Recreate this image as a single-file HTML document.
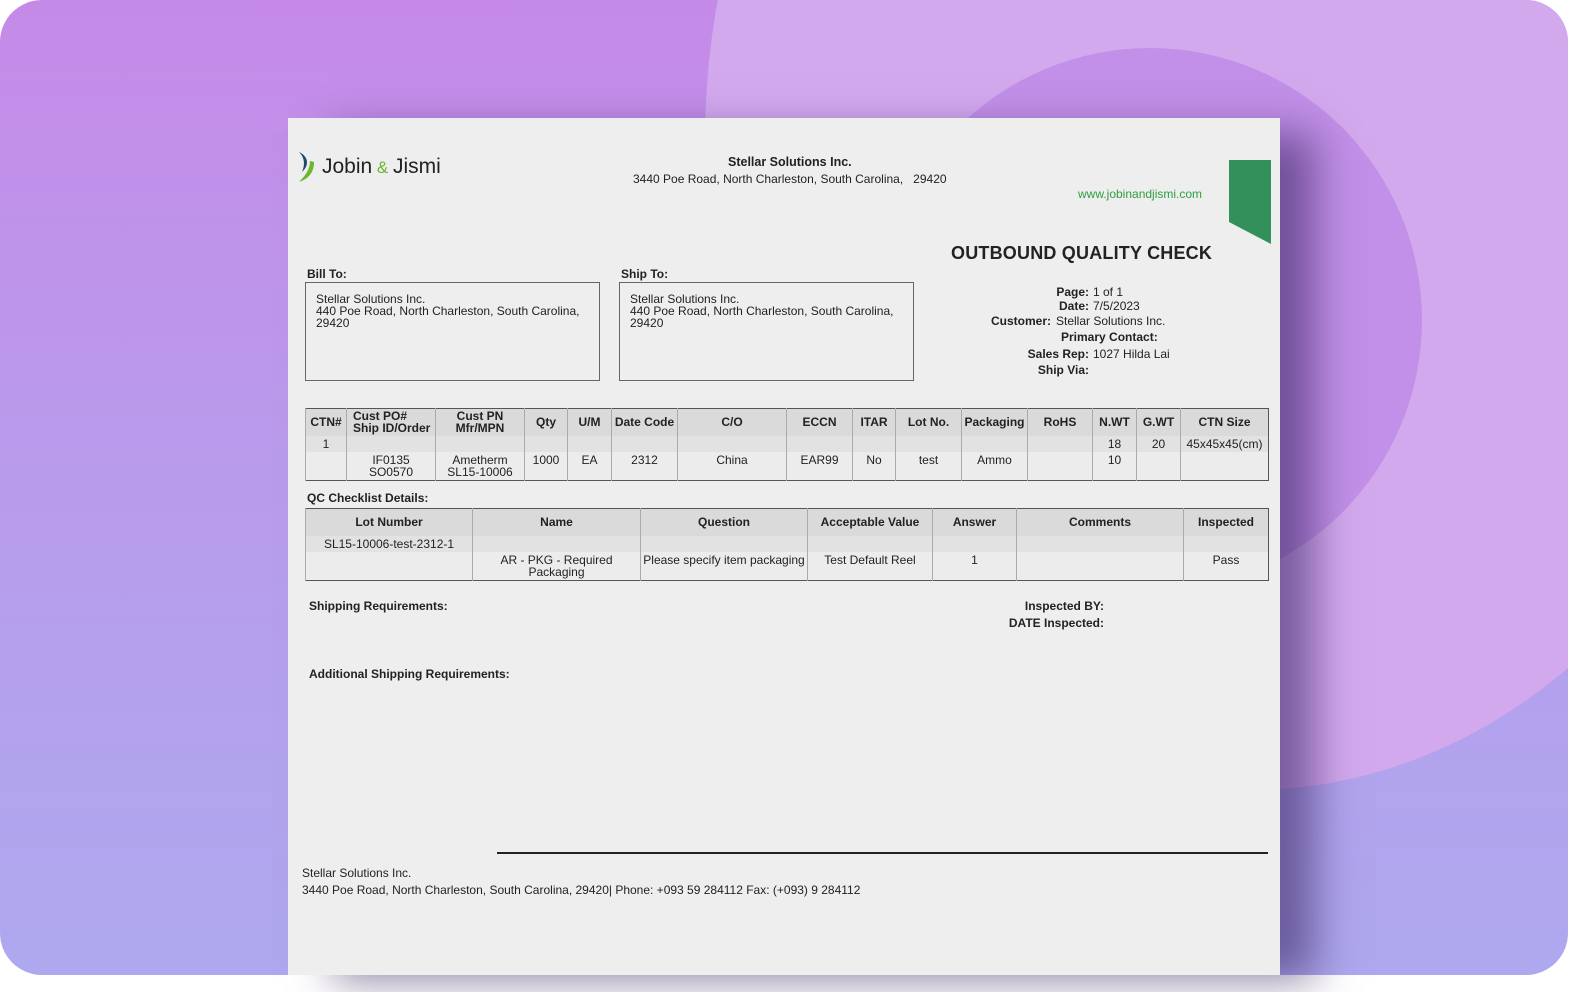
<!DOCTYPE html>
<html><head><meta charset="utf-8"><style>
*{margin:0;padding:0;box-sizing:border-box}
html,body{width:1595px;height:992px;background:#fff;overflow:hidden;font-family:"Liberation Sans",sans-serif;color:#222}
.card{position:absolute;left:0;top:0;width:1568px;height:975px;border-radius:42px;overflow:hidden;background:linear-gradient(180deg,#c58ae8 0%,#b89cec 50%,#aea8ee 100%)}
.doc{position:absolute;left:288px;top:118px;width:992px;height:857px;background:#eeeeee;box-shadow:40px 10px 40px -5px rgba(50,30,90,.55)}
.a{position:absolute;white-space:nowrap;font-size:12px;line-height:14px}
.b{font-weight:bold}
table{position:absolute;border-collapse:collapse;table-layout:fixed;font-size:12px;border:1.5px solid #555}
td,th{border-left:1px solid #aaa;text-align:center;line-height:12px;padding:0 2px;overflow:hidden;white-space:nowrap}
th{background:#dadada;height:27px;font-weight:bold;vertical-align:middle}
tr.r1 td{background:#e2e2e2;height:16px;vertical-align:middle}
tr.r2 td{background:#ececec;height:29px;vertical-align:top;padding-top:2px}
.box{position:absolute;border:1px solid #666;font-size:12px;line-height:12px;padding:10px 10px}
</style></head><body>
<div class="card">
<svg width="1568" height="975" style="position:absolute;left:0;top:0">
<ellipse cx="1250" cy="140" rx="545" ry="650" fill="#d3a9ee"/>
<circle cx="1150" cy="320" r="272" fill="#c290e8"/>
</svg>
</div>
<div class="doc"></div>
<!-- logo -->
<svg style="position:absolute;left:296px;top:151px" width="22" height="32" viewBox="0 0 22 32"><path d="M3 1 C12 5 14 14 6 21 C9 14 9 7 3 1Z" fill="#1f4a6a"/><path d="M18 11 C18 22 12 28 3 31 C10 24 14 18 14 10Z" fill="#6cb52d"/></svg>
<div class="a" style="left:322px;top:154px;font-size:21px;line-height:26px;color:#222">Jobin<span style="color:#6cb52d;font-size:17px"> &amp; </span>Jismi</div>
<div class="a b" style="left:728px;top:155px;font-size:12.5px">Stellar Solutions Inc.</div>
<div class="a" style="left:633px;top:172px">3440 Poe Road, North Charleston, South Carolina,&nbsp;&nbsp; 29420</div>
<div class="a" style="left:1078px;top:187px;color:#2e9e3e">www.jobinandjismi.com</div>
<svg style="position:absolute;left:1229px;top:160px" width="43" height="85"><polygon points="0,0 42,0 42,84 0,62" fill="#33905a"/></svg>
<div class="a b" style="left:951px;top:243px;font-size:18px;line-height:20px;letter-spacing:.2px">OUTBOUND QUALITY CHECK</div>
<div class="a b" style="left:307px;top:267px">Bill To:</div>
<div class="a b" style="left:621px;top:267px">Ship To:</div>
<div class="box" style="left:305px;top:282px;width:295px;height:99px">Stellar Solutions Inc.<br>440 Poe Road, North Charleston, South Carolina,<br>29420</div>
<div class="box" style="left:619px;top:282px;width:295px;height:99px">Stellar Solutions Inc.<br>440 Poe Road, North Charleston, South Carolina,<br>29420</div>
<div class="a b" style="right:506px;top:285px">Page:</div><div class="a" style="left:1093px;top:285px">1 of 1</div>
<div class="a b" style="right:506px;top:299px">Date:</div><div class="a" style="left:1093px;top:299px">7/5/2023</div>
<div class="a b" style="right:544px;top:314px">Customer:</div><div class="a" style="left:1056px;top:314px">Stellar Solutions Inc.</div>
<div class="a b" style="left:1061px;top:330px">Primary Contact:</div>
<div class="a b" style="right:506px;top:347px">Sales Rep:</div><div class="a" style="left:1093px;top:347px">1027 Hilda Lai</div>
<div class="a b" style="right:506px;top:363px">Ship Via:</div>

<table style="left:305px;top:408px;width:963px">
<colgroup><col style="width:41px"><col style="width:89px"><col style="width:89px"><col style="width:43px"><col style="width:44px"><col style="width:66px"><col style="width:109px"><col style="width:66px"><col style="width:43px"><col style="width:66px"><col style="width:66px"><col style="width:65px"><col style="width:44px"><col style="width:44px"><col style="width:88px"></colgroup>
<tr><th>CTN#</th><th style="text-align:left;padding-left:6px">Cust PO#<br>Ship ID/Order</th><th>Cust PN<br>Mfr/MPN</th><th>Qty</th><th>U/M</th><th>Date Code</th><th>C/O</th><th>ECCN</th><th>ITAR</th><th>Lot No.</th><th>Packaging</th><th>RoHS</th><th>N.WT</th><th>G.WT</th><th>CTN Size</th></tr>
<tr class="r1"><td>1</td><td></td><td></td><td></td><td></td><td></td><td></td><td></td><td></td><td></td><td></td><td></td><td>18</td><td>20</td><td>45x45x45(cm)</td></tr>
<tr class="r2"><td></td><td>IF0135<br>SO0570</td><td>Ametherm<br>SL15-10006</td><td>1000</td><td>EA</td><td>2312</td><td>China</td><td>EAR99</td><td>No</td><td>test</td><td>Ammo</td><td></td><td>10</td><td></td><td></td></tr>
</table>
<div class="a b" style="left:307px;top:491px">QC Checklist Details:</div>
<table style="left:305px;top:508px;width:963px">
<colgroup><col style="width:167px"><col style="width:168px"><col style="width:167px"><col style="width:125px"><col style="width:84px"><col style="width:167px"><col style="width:85px"></colgroup>
<tr><th>Lot Number</th><th>Name</th><th>Question</th><th>Acceptable Value</th><th>Answer</th><th>Comments</th><th>Inspected</th></tr>
<tr class="r1"><td>SL15-10006-test-2312-1</td><td></td><td></td><td></td><td></td><td></td><td></td></tr>
<tr class="r2"><td></td><td>AR - PKG - Required<br>Packaging</td><td>Please specify item packaging</td><td>Test Default Reel</td><td>1</td><td></td><td>Pass</td></tr>
</table>
<div class="a b" style="left:309px;top:599px">Shipping Requirements:</div>
<div class="a b" style="right:491px;top:599px">Inspected BY:</div>
<div class="a b" style="right:491px;top:616px">DATE Inspected:</div>
<div class="a b" style="left:309px;top:667px">Additional Shipping Requirements:</div>
<div style="position:absolute;left:497px;top:852px;width:771px;height:2px;background:#222"></div>
<div class="a" style="left:302px;top:866px">Stellar Solutions Inc.</div>
<div class="a" style="left:302px;top:883px">3440 Poe Road, North Charleston, South Carolina, 29420| Phone: +093 59 284112 Fax: (+093) 9 284112</div>
</body></html>
